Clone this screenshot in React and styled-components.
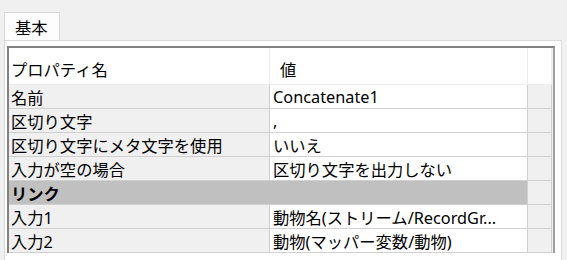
import React from "react";
import styled, { createGlobalStyle } from "styled-components";

const GlobalStyle = createGlobalStyle`
  html, body {
    margin: 0;
    padding: 0;
    background: #f0f0f0;
  }
  body {
    font-family: "Noto Sans", "Noto Sans CJK JP", sans-serif;
    font-size: 16px;
    color: #000;
  }
`;

const rows = [
  { name: "名前", value: "Concatenate1" },
  { name: "区切り文字", value: "," },
  { name: "区切り文字にメタ文字を使用", value: "いいえ" },
  { name: "入力が空の場合", value: "区切り文字を出力しない" },
  { name: "リンク", category: true },
  { name: "入力1", value: "動物名(ストリーム/RecordGr..." },
  { name: "入力2", value: "動物(マッパー変数/動物)" },
];

const App = () => {
  return (
    <Page>
      <GlobalStyle />
      <TabStrip>
        <Tab>基本</Tab>
      </TabStrip>
      <TabPanel>
        <Grid>
          <HeaderCell>プロパティ名</HeaderCell>
          <HeaderCell $value>値</HeaderCell>
          <HeaderCell $edge />
          {rows.map((row) =>
            row.category ? (
              <React.Fragment key={row.name}>
                <CategoryCell>{row.name}</CategoryCell>
                <EdgeCell />
              </React.Fragment>
            ) : (
              <React.Fragment key={row.name}>
                <NameCell>{row.name}</NameCell>
                <ValueCell>{row.value}</ValueCell>
                <EdgeCell />
              </React.Fragment>
            )
          )}
        </Grid>
      </TabPanel>
    </Page>
  );
};

export default App;

const Page = styled.div`
  width: 567px;
  height: 260px;
  overflow: hidden;
  padding-top: 12px;
  box-sizing: border-box;
  background: #f0f0f0;
`;

const TabStrip = styled.div`
  display: flex;
  padding-left: 4px;
  height: 28px;
`;

const Tab = styled.div`
  width: 56px;
  box-sizing: border-box;
  border: 1px solid #d9d9d9;
  border-bottom: none;
  background: #fdfdfd;
  padding: 3px 0 0 10px;
  font-family: "Noto Sans CJK JP", sans-serif;
  font-size: 16.3px;
  line-height: 22px;
`;

const TabPanel = styled.div`
  margin: 0 5px 0 4px;
  height: 240px;
  box-sizing: border-box;
  border: 1px solid #d9d9d9;
  background: #fff;
  padding: 5px 0 0 2px;
`;

const Grid = styled.div`
  display: grid;
  grid-template-columns: 261px 258px 24px;
  grid-auto-rows: 24px;
  grid-template-rows: 37px;
  width: 548px;
  box-sizing: border-box;
  border-top: 2px solid #808080;
  border-left: 2px solid #808080;
  border-right: 2px solid #a0a0a0;
  background: #f0f0f0;
`;

const Cell = styled.div`
  box-sizing: border-box;
  display: flex;
  align-items: center;
  white-space: nowrap;
  overflow: hidden;
  border-bottom: 1px solid #d0d0d0;
  border-right: 1px solid #d0d0d0;
  font-size: 16.3px;
`;

const HeaderCell = styled(Cell)`
  background: #fff;
  padding: 5px 0 0 ${(p) => (p.$value ? "10px" : "2px")};
  border-right: 1px solid #ececec;
  border-bottom: 1px solid #ececec;
`;

const NameCell = styled(Cell)`
  background: #f0f0f0;
  padding-left: 2px;
`;

const ValueCell = styled(Cell)`
  background: #fff;
  padding-left: 3px;
`;

const EdgeCell = styled(Cell)`
  background: #f0f0f0;
`;

const CategoryCell = styled(Cell)`
  grid-column: span 2;
  background: #c0c0c0;
  font-weight: bold;
  padding-left: 2px;
`;
